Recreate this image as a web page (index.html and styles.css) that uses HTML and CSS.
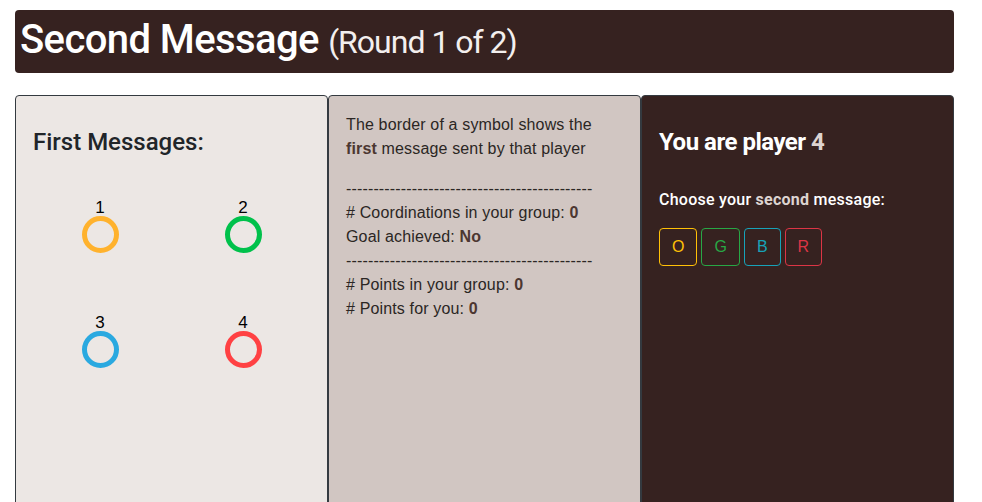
FILE: index.html
```html
<!DOCTYPE html>
<html lang="en">
<head>
<meta charset="utf-8">
<title>Second Message</title>
<link rel="stylesheet" href="styles.css">
</head>
<body>
<header class="title-bar">
  <h1 class="title">Second Message <small class="title-sub">(Round 1 of 2)</small></h1>
</header>
<main class="panels">
  <section class="panel panel-light">
    <h4 class="panel-heading">First Messages:</h4>
    <div class="players">
      <div class="player"><span class="player-num">1</span><span class="ring ring-orange"></span></div>
      <div class="player"><span class="player-num">2</span><span class="ring ring-green"></span></div>
      <div class="player"><span class="player-num">3</span><span class="ring ring-blue"></span></div>
      <div class="player"><span class="player-num">4</span><span class="ring ring-red"></span></div>
    </div>
  </section>
  <section class="panel panel-mid">
    <p class="info">The border of a symbol shows the <strong class="em-dark">first</strong> message sent by that player</p>
    <p class="info">---------------------------------------------<br>
      # Coordinations in your group: <strong class="em-dark">0</strong><br>
      Goal achieved: <strong class="em-dark">No</strong><br>
      ---------------------------------------------<br>
      # Points in your group: <strong class="em-dark">0</strong><br>
      # Points for you: <strong class="em-dark">0</strong></p>
  </section>
  <section class="panel panel-dark">
    <h4 class="panel-heading heading-strong">You are player <strong class="em-light">4</strong></h4>
    <p class="choose">Choose your <strong class="em-light">second</strong> message:</p>
    <div class="choices">
      <button class="choice choice-orange" type="button">O</button>
      <button class="choice choice-green" type="button">G</button>
      <button class="choice choice-blue" type="button">B</button>
      <button class="choice choice-red" type="button">R</button>
    </div>
  </section>
</main>
</body>
</html>
```

FILE: styles.css
```css
html, body {
  margin: 0;
  padding: 0;
  background: #ffffff;
}

body {
  font-family: "Liberation Sans", Arial, sans-serif;
  font-size: 16px;
  line-height: 24px;
  color: #212529;
  overflow: hidden;
}

.title-bar {
  box-sizing: border-box;
  width: 939px;
  height: 63px;
  margin: 10px 0 0 15px;
  padding: 6px 5px 0;
  background: #362220;
  border-radius: 4px;
}

.title {
  margin: 0;
  font-family: Roboto, "Liberation Sans", sans-serif;
  font-weight: 500;
  font-size: 40px;
  line-height: 48px;
  letter-spacing: -0.6px;
  color: #ffffff;
}

.title-sub {
  font-weight: 400;
  font-size: 32px;
  letter-spacing: -1px;
  color: #f3efee;
}

.panels {
  display: flex;
  width: 939px;
  margin: 22px 0 0 15px;
}

.panel {
  box-sizing: border-box;
  width: 313px;
  min-height: 430px;
  border: 1px solid #343a40;
  border-radius: 4px;
  padding: 32px 17px 16px;
}

.panel-light {
  background: #ece7e4;
}

.panel-mid {
  background: #d1c6c2;
  padding-top: 17px;
  letter-spacing: 0.15px;
}

.panel-dark {
  background: #362220;
  color: #ffffff;
}

.panel-heading {
  margin: 0;
  font-family: Roboto, "Liberation Sans", sans-serif;
  font-weight: 500;
  font-size: 24px;
  line-height: 28.8px;
  color: #212529;
}

.heading-strong {
  font-weight: 700;
  color: #ffffff;
  letter-spacing: -0.5px;
}

.players {
  display: grid;
  grid-template-columns: 143px 143px;
  justify-content: center;
  row-gap: 61px;
  margin-top: 42px;
}

.player {
  display: flex;
  flex-direction: column;
  align-items: center;
}

.player-num {
  font-family: "Liberation Sans", Arial, sans-serif;
  font-size: 17px;
  line-height: 17px;
  color: #000000;
}

.ring {
  box-sizing: border-box;
  width: 37px;
  height: 37px;
  border: 5px solid;
  border-radius: 50%;
}

.ring-orange { border-color: #ffb22d; }
.ring-green { border-color: #00c14b; }
.ring-blue { border-color: #2aa9e0; }
.ring-red { border-color: #ff4143; }

.info {
  margin: 0 0 16px;
  color: #2b2624;
}

.em-dark {
  font-weight: 700;
  color: #4c3731;
}

.em-light {
  font-weight: 700;
  color: #ddd4d1;
}

.choose {
  margin: 31px 0 16px;
  font-family: Roboto, "Liberation Sans", sans-serif;
  font-weight: 500;
  letter-spacing: 0.25px;
  color: #ffffff;
}

.choices {
  display: flex;
  gap: 4px;
}

.choice {
  box-sizing: border-box;
  margin: 0;
  padding: 6px 12px;
  background: transparent;
  border: 1px solid;
  border-radius: 4px;
  font-family: "Liberation Sans", Arial, sans-serif;
  font-size: 16px;
  line-height: 24px;
}

.choice-orange { color: #ffc107; border-color: #ffc107; }
.choice-green { color: #28a745; border-color: #28a745; }
.choice-blue { color: #17a2b8; border-color: #17a2b8; }
.choice-red { color: #dc3545; border-color: #dc3545; }
```
